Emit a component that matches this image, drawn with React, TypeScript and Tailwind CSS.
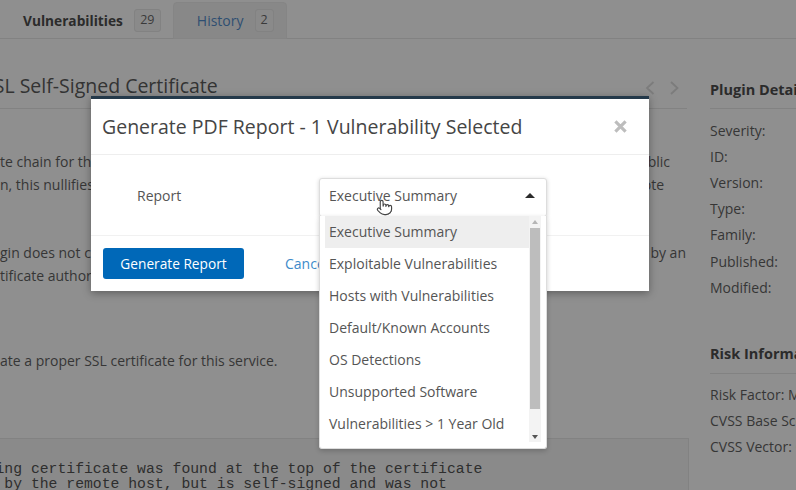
import React from "react";
import { Pointer } from "lucide-react";

const options = [
  "Executive Summary",
  "Exploitable Vulnerabilities",
  "Hosts with Vulnerabilities",
  "Default/Known Accounts",
  "OS Detections",
  "Unsupported Software",
  "Vulnerabilities > 1 Year Old",
];

const pluginRows = ["Severity:", "ID:", "Version:", "Type:", "Family:", "Published:", "Modified:"];
const riskRows = ["Risk Factor: Medium", "CVSS Base Score: 6.4", "CVSS Vector: CVSS2#AV:N"];

// left text runs in under the modal, right fragment pokes out past it
const Line = ({ left, right, inset }: { left: string; right?: string; inset?: string }) => (
  <div className="flex h-[23px] items-center justify-between whitespace-nowrap">
    <span>{left}</span>
    {right && <span className={inset}>{right}</span>}
  </div>
);

const Background = () => (
  <div className="flex h-full flex-col">
    {/* Tabs */}
    <div className="flex h-[39px] shrink-0 border-b border-[#828282] pt-[2px] pl-[23px]">
      <div className="flex items-center">
        <span className="mt-[2px] text-[13.7px] font-bold text-[#2b2b2b]">Vulnerabilities</span>
        <span className="ml-[11px] flex h-[23px] w-[27px] items-center justify-center rounded-[3px] border border-[#828282] bg-[#8a8a8a] text-[12.5px] text-[#3a3a3a]">
          29
        </span>
      </div>
      <div className="ml-[12px] flex h-[37px] w-[114px] items-center rounded-t-[4px] border border-[#858585] bg-[#888888] pl-[23px]">
        <span className="text-[14px] text-[#2f4f72]">History</span>
        <span className="ml-[11px] flex h-[23px] w-[19px] items-center justify-center rounded-[3px] border border-[#828282] bg-[#8a8a8a] text-[12.5px] text-[#3a3a3a]">
          2
        </span>
      </div>
    </div>

    <div className="flex min-h-0 flex-1">
      {/* Main column */}
      <div className="flex w-[689px] shrink-0 flex-col overflow-hidden text-[14px] text-[#363636]">
        <div className="mr-[2px] flex h-[70px] shrink-0 items-end justify-between border-b border-[#828282] pb-[8px]">
          <h2 className="-ml-[17px] text-[19.5px] leading-[28px] whitespace-nowrap text-[#333333]">
            SSL Self-Signed Certificate
          </h2>
          <div className="flex items-center gap-[12px] pr-[7px] pb-[3px] text-[#7c7c7c]">
            <svg width="12" height="18" viewBox="0 0 12 18" fill="none" stroke="currentColor" strokeWidth="1.8">
              <path d="M9.5 3 L3 9 L9.5 15" />
            </svg>
            <svg width="12" height="18" viewBox="0 0 12 18" fill="none" stroke="currentColor" strokeWidth="1.8">
              <path d="M3 3 L9.5 9 L3 15" />
            </svg>
          </div>
        </div>
        <div className="mt-[41px] pr-[3px]">
          <Line left="te chain for this service" right="blic" inset="pr-[16px]" />
          <Line left="n, this nullifies the use" right="ote" inset="pr-[22px]" />
        </div>
        <div className="mt-[45px] pr-[3px]">
          <Line left="gin does not check" right="by an" />
          <Line left="tificate authority." />
        </div>
        <div className="mt-[62px]">
          <Line left="ate a proper SSL certificate for this service." />
        </div>
        <div className="mt-[66px] min-h-0 flex-1 border-t border-r border-[#828282] bg-[#8a8a8a] pt-[23px] font-['Liberation_Mono',monospace] text-[14.75px] leading-[14.7px] whitespace-pre text-[#2e2e2e]">
          <div className="-ml-[4.5px]">
            {"ing certificate was found at the top of the certificate\n by the remote host, but is self-signed and was not"}
          </div>
        </div>
      </div>

      {/* Side column */}
      <div className="w-[21px] shrink-0" />
      <div className="min-w-0 flex-1 text-[14px] whitespace-nowrap text-[#363636]">
        <h3 className="flex h-[70px] items-end border-b border-[#828282] pb-[7px] text-[14.5px] font-bold text-[#2b2b2b]">
          Plugin Details
        </h3>
        <div className="mt-[8px]">
          {pluginRows.map((r) => (
            <div key={r} className="flex h-[26.2px] items-center">
              {r}
            </div>
          ))}
        </div>
        <h3 className="mt-[43px] border-b border-[#828282] pb-[8px] text-[14.5px] font-bold text-[#2b2b2b]">
          Risk Information
        </h3>
        <div className="mt-[7px]">
          {riskRows.map((r) => (
            <div key={r} className="flex h-[26px] items-center">
              {r}
            </div>
          ))}
        </div>
      </div>
    </div>
  </div>
);

const Modal = () => (
  <div className="absolute top-[96px] left-[91px] flex h-[195px] w-[558px] flex-col border-t-[3px] border-[#24394a] bg-white text-[#4b4b4b] shadow-[0_2px_8px_rgba(0,0,0,0.35)]">
    <div className="flex h-[56px] shrink-0 items-center justify-between border-b border-[#eeeeee] pr-[22px] pl-[11px]">
      <h1 className="pt-[1px] text-[19.5px] leading-[26px] text-[#454545]">Generate PDF Report - 1 Vulnerability Selected</h1>
      <svg width="13" height="13" viewBox="0 0 14 14" stroke="#bdbdbd" strokeWidth="3.4">
        <path d="M1.5 1.5 L12.5 12.5 M12.5 1.5 L1.5 12.5" />
      </svg>
    </div>

    <div className="flex h-[81px] shrink-0 items-start border-b border-[#f1f1f1] pt-[23px] pl-[46px]">
      <span className="w-[182px] pt-[7px] text-[14px] text-[#555555]">Report</span>
      <div className="relative w-[228px] rounded-[3px] border border-[#dddddd] bg-white shadow-[0_1px_4px_rgba(0,0,0,0.18)]">
        <div className="flex h-[37px] items-center justify-between pr-[11px] pb-[4px] pl-[9px] text-[14px] text-[#555555]">
          <span>Executive Summary</span>
          <span className="h-0 w-0 border-x-[5px] border-b-[5px] border-x-transparent border-b-[#2b2b2b]" />
        </div>
        <div className="absolute top-[37px] -left-px flex h-[233px] w-[228px] rounded-b-[3px] border border-t-0 border-[#dddddd] bg-white pr-[5px] pl-[5px] shadow-[0_2px_5px_rgba(0,0,0,0.2)]">
          <ul className="min-w-0 flex-1 text-[14px] text-[#555555]">
            {options.map((o, i) => (
              <li
                key={o}
                className={
                  i === 0
                    ? "flex h-[32px] items-center bg-[#eeeeee] pb-[2px] pl-[4px] whitespace-nowrap"
                    : "flex h-[32px] items-center pb-[2px] pl-[4px] whitespace-nowrap"
                }
              >
                {o}
              </li>
            ))}
          </ul>
          {/* Scrollbar */}
          <div className="absolute top-0 right-[5px] flex h-[226px] w-[12px] flex-col items-center bg-[#f3f3f3]">
            <span className="mt-[4px] h-0 w-0 border-x-[3px] border-b-[4px] border-x-transparent border-b-[#b5b5b5]" />
            <span className="mt-[4px] h-[181px] w-[10px] bg-[#bdbdbd]" />
            <span className="mt-[26px] h-0 w-0 border-x-[3px] border-t-[4px] border-x-transparent border-t-[#555555]" />
          </div>
        </div>
        {/* Mouse cursor */}
        <Pointer className="absolute top-[20px] left-[56px] h-[17px] w-[17px] fill-white text-[#444444]" strokeWidth={1.6} />
      </div>
    </div>

    <div className="flex flex-1 items-start pt-[12px] pl-[12px]">
      <button className="h-[31px] w-[141px] rounded-[3px] bg-[#0068b8] pt-[1px] text-[13.7px] text-white">Generate Report</button>
      <span className="ml-[41px] pt-[5px] text-[14px] text-[#3d8bca]">Cancel</span>
    </div>
  </div>
);

export default function App() {
  return (
    <div className="relative h-[490px] w-[796px] overflow-hidden bg-[#8f8f8f] font-['Open_Sans',sans-serif]">
      <Background />
      <Modal />
    </div>
  );
}
